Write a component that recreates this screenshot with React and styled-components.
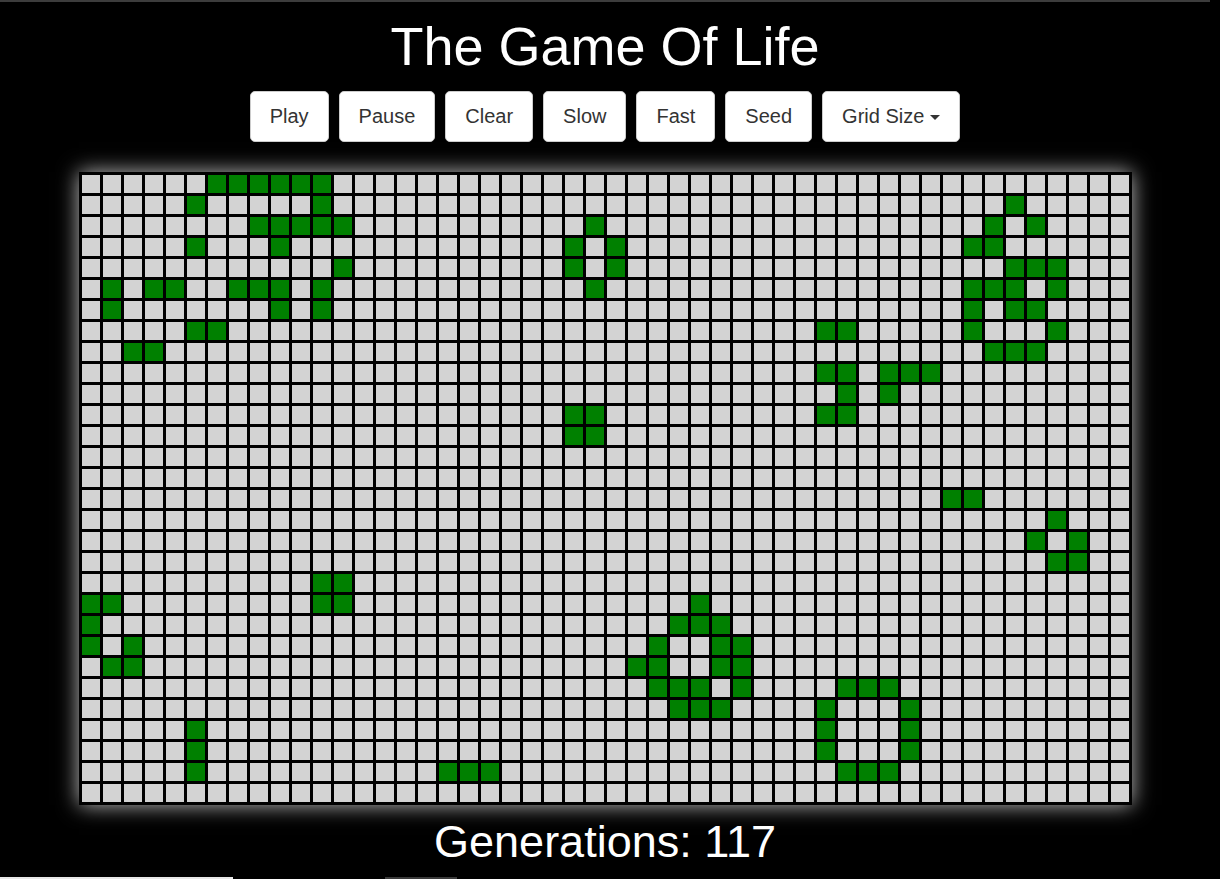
import React from 'react';
import styled, { createGlobalStyle } from 'styled-components';

const ROWS = 30;
const COLS = 50;

// live cells for generation 117, row index -> columns
const LIVE = {
  0: [6, 7, 8, 9, 10, 11],
  1: [5, 11, 44],
  2: [8, 9, 10, 11, 12, 24, 43, 45],
  3: [5, 9, 23, 25, 42, 43],
  4: [12, 23, 25, 44, 45, 46],
  5: [1, 3, 4, 7, 8, 9, 11, 24, 42, 43, 44, 46],
  6: [1, 9, 11, 42, 44, 45],
  7: [5, 6, 35, 36, 42, 46],
  8: [2, 3, 43, 44, 45],
  9: [35, 36, 38, 39, 40],
  10: [36, 38],
  11: [23, 24, 35, 36],
  12: [23, 24],
  15: [41, 42],
  16: [46],
  17: [45, 47],
  18: [46, 47],
  19: [11, 12],
  20: [0, 1, 11, 12, 29],
  21: [0, 28, 29, 30],
  22: [0, 2, 27, 30, 31],
  23: [1, 2, 26, 27, 30, 31],
  24: [27, 28, 29, 31, 36, 37, 38],
  25: [28, 29, 30, 35, 39],
  26: [5, 35, 39],
  27: [5, 35, 39],
  28: [5, 17, 18, 19, 36, 37, 38],
};

const buttons = ['Play', 'Pause', 'Clear', 'Slow', 'Fast', 'Seed'];

function App() {
  const cells = [];
  for (let r = 0; r < ROWS; r++) {
    const alive = LIVE[r] || [];
    for (let c = 0; c < COLS; c++) {
      cells.push(<Cell key={r + '-' + c} $alive={alive.includes(c)} />);
    }
  }

  return (
    <Page>
      <GlobalStyle />
      <Title>The Game Of Life</Title>
      <Toolbar>
        {buttons.map(b => (
          <Button key={b}>{b}</Button>
        ))}
        <Button>
          Grid Size<Caret />
        </Button>
      </Toolbar>
      <Board>{cells}</Board>
      <Generations>Generations: 117</Generations>
      <BottomStrip>
        <Thumb />
        <Marker />
      </BottomStrip>
    </Page>
  );
}

export default App;

const GlobalStyle = createGlobalStyle`
  html, body {
    margin: 0;
    background: #000;
  }
  body {
    font-family: "Liberation Sans", Arial, Helvetica, sans-serif;
  }
`;

const Page = styled.div`
  width: 1210px;
  height: 877px;
  border-top: 2px solid #3c3c3c;
  display: flex;
  flex-direction: column;
  align-items: center;
  color: #fff;
`;

const Title = styled.h1`
  margin: 12px 0 0;
  font-size: 54px;
  font-weight: normal;
  line-height: 65px;
`;

const Toolbar = styled.div`
  display: flex;
  gap: 10px;
  margin-top: 12px;
`;

const Button = styled.button`
  height: 51px;
  padding: 0 19px;
  display: flex;
  align-items: center;
  background: #fff;
  color: #333;
  border: 1px solid #ccc;
  border-radius: 5px;
  font-family: inherit;
  font-size: 20px;
  cursor: pointer;

  &:hover {
    background: #e6e6e6;
  }
`;

const Caret = styled.span`
  display: inline-block;
  margin-left: 6px;
  margin-top: 2px;
  width: 0;
  height: 0;
  border-top: 5px solid #333;
  border-left: 5px solid transparent;
  border-right: 5px solid transparent;
`;

const Board = styled.div`
  margin-top: 30px;
  display: grid;
  grid-template-columns: repeat(${COLS}, 18px);
  grid-auto-rows: 18px;
  gap: 3px;
  padding: 3px;
  background: #000;
  box-shadow: 0 0 20px rgba(255, 255, 255, 0.75);
`;

const Cell = styled.div`
  background: ${p => (p.$alive ? '#008000' : '#d3d3d3')};
`;

const Generations = styled.div`
  margin-top: 10px;
  font-size: 45px;
  line-height: 53px;
`;

const BottomStrip = styled.div`
  margin-top: auto;
  align-self: flex-start;
  display: flex;
  height: 2px;
  width: 1220px;
`;

const Thumb = styled.div`
  width: 233px;
  background: #e8e8e8;
`;

const Marker = styled.div`
  width: 72px;
  margin-left: 152px;
  background: #3a3a3a;
`;
